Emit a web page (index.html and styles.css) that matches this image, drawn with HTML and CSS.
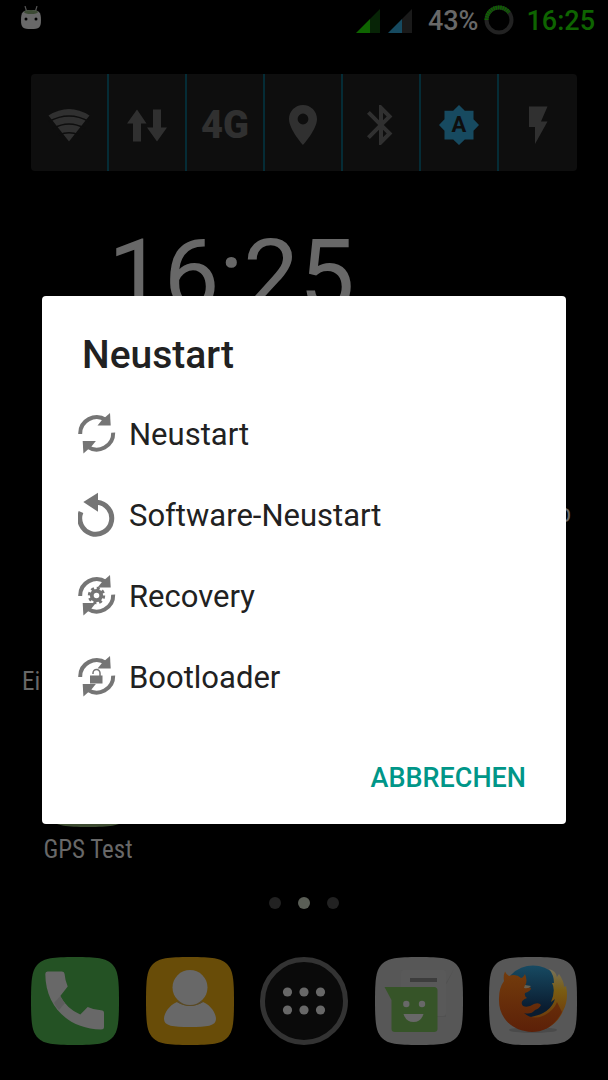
FILE: index.html
```html
<!DOCTYPE html>
<html lang="de">
<head>
    <meta charset="UTF-8">
    <meta name="viewport" content="width=device-width, initial-scale=1.0">
    <title>Neustart</title>
    <link rel="stylesheet" href="styles.css">
</head>
<body>

    <!-- Home screen behind the dialog -->
    <div class="home">
        <header class="status-bar">
            <svg class="robot" width="20" height="24" viewBox="0 0 20 24">
                <path d="M4 0l1.500 5M16 0l-1.500 5" stroke="#555" stroke-width="1.200"/>
                <path d="M10 4C18 4 20 6 20 14S18 23 10 23 0 22 0 14 2 4 10 4z" fill="#686868"/>
                <ellipse cx="10" cy="6" rx="7" ry="2" fill="#3c4a34"/>
                <circle cx="5" cy="13" r="1.500"/>
                <circle cx="15" cy="13" r="1.500"/>
            </svg>
            <div class="status-right">
                <svg class="signal" width="24" height="24" viewBox="0 0 24 24">
                    <path d="M24 0v24H14V10z" fill="#072406"/>
                    <path d="M14 10v14H0z" fill="#0e6400"/>
                </svg>
                <svg class="signal" width="24" height="24" viewBox="0 0 24 24">
                    <path d="M24 0v24H14V10z" fill="#1a1a1a"/>
                    <path d="M14 10v14H0z" fill="#164a60"/>
                </svg>
                <span class="percent">43%</span>
                <svg class="battery" width="30" height="30" viewBox="0 0 30 30">
                    <circle cx="15" cy="15" r="12.500" fill="none" stroke="#222" stroke-width="4"/>
                    <path d="M2.500 15A12.500 12.500 0 0 1 25 7.500" fill="none" stroke="#0e6400" stroke-width="4" stroke-dasharray="1.600 0.700"/>
                </svg>
                <span class="time">16:25</span>
            </div>
        </header>

        <div class="toggles">
            <button class="toggle" aria-label="WLAN">
                <svg viewBox="0 0 48 48">
                    <path d="M24 40.500L3.500 14.500Q24 1.500 44.500 14.500z" fill="#303030"/>
                    <path d="M4 20.500Q24 9.500 44 20.500M8 27.500Q24 18.500 40 27.500M14 34Q24 29.500 34 34" fill="none" stroke="#0e0e0e" stroke-width="1.500"/>
                </svg>
            </button>
            <button class="toggle" aria-label="Daten">
                <svg viewBox="0 0 48 48" fill="#303030">
                    <path d="M14 8.500L23.500 22.500H18V40.500H10V22.500H4z"/>
                    <path d="M34 40.500L24 26.500H30V8.500H38V26.500H44z"/>
                </svg>
            </button>
            <button class="toggle">4G</button>
            <button class="toggle" aria-label="Standort">
                <svg viewBox="0 0 24 24" fill="#303030">
                    <path d="M12 2C8.130 2 5 5.130 5 9c0 5.250 7 13 7 13s7-7.750 7-13c0-3.870-3.130-7-7-7zm0 9.700a2.700 2.700 0 1 1 0-5.400 2.700 2.700 0 0 1 0 5.400z"/>
                </svg>
            </button>
            <button class="toggle" aria-label="Bluetooth">
                <svg viewBox="0 0 24 24" fill="#303030">
                    <path d="M17.710 7.710L12 2h-1v7.590L6.410 5 5 6.410 10.590 12 5 17.590 6.410 19 11 14.410V22h1l5.710-5.710-4.300-4.290 4.300-4.290zM13 5.830l1.880 1.880L13 9.590V5.830zm1.880 10.460L13 18.170v-3.760l1.880 1.880z"/>
                </svg>
            </button>
            <button class="toggle" aria-label="Helligkeit">
                <svg viewBox="0 0 48 48">
                    <path d="M24 4l5.800 5.800H38.500V18.200L44 24l-5.500 5.800V38.500H29.800L24 44l-5.800-5.500H9.500V29.800L4 24l5.500-5.800V9.800h8.700z" fill="#174a60"/>
                    <text class="auto" x="24" y="31" text-anchor="middle">A</text>
                </svg>
            </button>
            <button class="toggle" aria-label="Taschenlampe">
                <svg viewBox="0 0 48 48" fill="#303030">
                    <path d="M15 5.500V26h6v17L33.500 20.500H27L33.500 5.500z"/>
                </svg>
            </button>
        </div>

        <div class="clock">16:25</div>

        <div class="apps">
            <div class="app right">o</div>
            <div class="app left">Ei</div>
            <div class="app">
                <svg class="app-icon" viewBox="0 0 88 88">
                    <path d="M44 0C66 0 75 1 81 7S88 22 88 44 87 75 81 81 66 88 44 88 13 87 7 81 0 66 0 44 1 13 7 7 22 0 44 0z" fill="#3c4a30"/>
                </svg>
                GPS Test
            </div>
        </div>

        <div class="pages">
            <span class="dot"></span>
            <span class="dot current"></span>
            <span class="dot"></span>
        </div>

        <nav class="dock">
            <button class="dock-item" aria-label="Telefon">
                <svg viewBox="0 0 88 88">
                    <path d="M44 0C66 0 75 1 81 7S88 22 88 44 87 75 81 81 66 88 44 88 13 87 7 81 0 66 0 44 1 13 7 7 22 0 44 0z" fill="#245224"/>
                    <path d="M16.500 14.500H31Q33.500 14.500 33.600 17Q34 23 36.700 29.500L29.300 39Q36 52 49.300 57.500L56.700 50Q63 53 70 53.300Q73 53.400 73 56V70Q73 72.500 70 72.500C38 72 14.500 50 14.300 17Q14.300 14.500 16.500 14.500z" fill="#686868"/>
                    <path d="M29.300 39L23 46Q25 50 28 53L34 46Q31 43 29.300 39z" fill="#5e5e5e"/>
                </svg>
            </button>
            <button class="dock-item" aria-label="Kontakte">
                <svg viewBox="0 0 88 88">
                    <path d="M44 0C66 0 75 1 81 7S88 22 88 44 87 75 81 81 66 88 44 88 13 87 7 81 0 66 0 44 1 13 7 7 22 0 44 0z" fill="#684c08"/>
                    <path d="M31 45Q44 53 57 45C66 49 70 57 70 62C70 69 61 70 44 70S18 69 18 62C18 57 22 49 31 45z" fill="#686868"/>
                    <path d="M31 45Q44 53 57 45L55 43H33z" fill="#594a28"/>
                    <circle cx="44" cy="30.500" r="17.500" fill="#686868"/>
                </svg>
            </button>
            <button class="dock-item" aria-label="Apps">
                <svg viewBox="0 0 88 88">
                    <circle cx="44" cy="44" r="41.500" fill="#0a0a0a" stroke="#333" stroke-width="5"/>
                    <g fill="#686868">
                        <circle cx="27.500" cy="35" r="4.600"/>
                        <circle cx="44" cy="35" r="4.600"/>
                        <circle cx="60.500" cy="35" r="4.600"/>
                        <circle cx="27.500" cy="53" r="4.600"/>
                        <circle cx="44" cy="53" r="4.600"/>
                        <circle cx="60.500" cy="53" r="4.600"/>
                    </g>
                </svg>
            </button>
            <button class="dock-item" aria-label="Nachrichten">
                <svg viewBox="0 0 88 88">
                    <path d="M44 0C66 0 75 1 81 7S88 22 88 44 87 75 81 81 66 88 44 88 13 87 7 81 0 66 0 44 1 13 7 7 22 0 44 0z" fill="#575757"/>
                    <path d="M70 28L79 12 72 26z" fill="#505050"/>
                    <path d="M62 60h9V34L63 30z" fill="#525252"/>
                    <rect x="26" y="13" width="45" height="46" rx="3" fill="#595959"/>
                    <rect x="35" y="21" width="27" height="4" fill="#3d3d3d"/>
                    <path d="M9.500 30H59Q62.500 30 62.500 33.500V72Q62.500 75 59 75H20Q16.500 75 16.500 72V43z" fill="#365428"/>
                    <circle cx="31.300" cy="47" r="3.200" fill="#686868"/>
                    <circle cx="47" cy="47" r="3.200" fill="#686868"/>
                    <path d="M28.500 57H48.500Q46 65 38.500 65T28.500 57z" fill="#686868"/>
                </svg>
            </button>
            <button class="dock-item" aria-label="Firefox">
                <svg viewBox="0 0 88 88">
                    <defs>
                        <linearGradient id="globe" x1="0" y1="0" x2="0" y2="1">
                            <stop offset="0" stop-color="#174a62"/>
                            <stop offset="0.700" stop-color="#0a1c30"/>
                        </linearGradient>
                        <linearGradient id="fox" x1="0" y1="0" x2="0" y2="1">
                            <stop offset="0" stop-color="#733c0c"/>
                            <stop offset="1" stop-color="#5c2008"/>
                        </linearGradient>
                        <linearGradient id="tail" x1="0" y1="0" x2="0" y2="1">
                            <stop offset="0" stop-color="#77725a"/>
                            <stop offset="0.350" stop-color="#7a5c12"/>
                            <stop offset="1" stop-color="#682c08"/>
                        </linearGradient>
                    </defs>
                    <path d="M44 0C66 0 75 1 81 7S88 22 88 44 87 75 81 81 66 88 44 88 13 87 7 81 0 66 0 44 1 13 7 7 22 0 44 0z" fill="#575757"/>
                    <ellipse cx="44" cy="73" rx="24" ry="3" fill="#4a4a4a"/>
                    <circle cx="44" cy="39" r="30.500" fill="url(#globe)"/>
                    <path d="M60 12Q67 14 68 20L70 17Q75 24 75 30L77 29Q80 43 74 54C68 68 56 74 46 74L42 60Q62 56 66 42L62 45Q67 33 63 26L65 26Q65 18 60 12z" fill="url(#tail)"/>
                    <path d="M16 14.500Q17 17 20 19Q27 16 32 21Q34 21 36 17Q39 24 36 29L42 31Q42 34 36 36Q35 39 38 41Q30 44 34 49Q39 51 45 47Q50 45 52 48Q50 52 46 53Q42 58 35 56Q44 64 56 58Q65 53 68 45L73 55C65 70 54 75 43 75C22 74 9 60 10 41Q10 31 15 24Q14 19 16 14.500z" fill="url(#fox)"/>
                    <path d="M36 28L42 29Q40 32 35 31z" fill="#686050"/>
                </svg>
            </button>
        </nav>
    </div>

    <!-- The reboot dialog -->
    <div class="overlay">
        <section class="dialog" role="dialog" aria-labelledby="dialog-title">
            <h1 id="dialog-title">Neustart</h1>
            <ul class="options">
                <li>
                    <button class="option">
                        <svg width="40" height="48" viewBox="0 0 40 48">
                            <g id="half">
                                <path d="M2.200 23A16.500 16.500 0 0 1 28 9" fill="none" stroke="#757575" stroke-width="4"/>
                                <path d="M32 2L32.700 14.500 19.500 14.500 24 9z" fill="#757575"/>
                            </g>
                            <use href="#half" transform="rotate(180 18.700 22.300)"/>
                        </svg>
                        Neustart
                    </button>
                </li>
                <li>
                    <button class="option">
                        <svg width="40" height="48" viewBox="0 0 40 48">
                            <path d="M19 10.300A16 16 0 1 1 3 20" fill="none" stroke="#757575" stroke-width="5"/>
                            <path d="M5.300 10L20 0.700V19.700z" fill="#757575"/>
                        </svg>
                        Software-Neustart
                    </button>
                </li>
                <li>
                    <button class="option">
                        <svg width="40" height="48" viewBox="0 0 40 48">
                            <use href="#half"/>
                            <use href="#half" transform="rotate(180 18.700 22.300)"/>
                            <circle cx="18.500" cy="22.500" r="7.200" fill="none" stroke="#757575" stroke-width="3" stroke-dasharray="3 2.655"/>
                            <circle cx="18.500" cy="22.500" r="4.700" fill="none" stroke="#757575" stroke-width="3.800"/>
                        </svg>
                        Recovery
                    </button>
                </li>
                <li>
                    <button class="option">
                        <svg width="40" height="48" viewBox="0 0 40 48">
                            <use href="#half"/>
                            <use href="#half" transform="rotate(180 18.700 22.300)"/>
                            <rect x="12" y="21.500" width="12.500" height="8" fill="#757575"/>
                            <path d="M15 20V19A3.500 3.500 0 0 1 22 19V22" fill="none" stroke="#757575" stroke-width="1.500"/>
                        </svg>
                        Bootloader
                    </button>
                </li>
            </ul>
            <div class="actions">
                <button class="cancel">ABBRECHEN</button>
            </div>
        </section>
    </div>

</body>
</html>
```
FILE: styles.css
```css
* {
    box-sizing: border-box;
}

body {
    margin: 0;
    background-color: #000;
    font-family: Roboto, sans-serif;
}

button {
    padding: 0;
    border: none;
    background: none;
    font-family: inherit;
    cursor: pointer;
}

svg {
    display: block;
}

.home {
    display: flex;
    flex-direction: column;
    min-height: 100vh;
    color: #686868;
}

.status-bar {
    display: flex;
    justify-content: space-between;
    align-items: center;
    height: 42px;
    padding: 0 13px 0 21px;
}

.robot {
    margin-bottom: 6px;
}

.status-right {
    display: flex;
    align-items: center;
    font-size: 27px;
    font-weight: 500;
    line-height: 42px;
}

.signal {
    margin-right: 8px;
}

.percent {
    margin: 0 6px 0 8px;
}

.battery {
    margin-bottom: 2px;
}

.time {
    margin-left: 12px;
    color: #0e6400;
}

.toggles {
    display: grid;
    grid-template-columns: repeat(7, 1fr);
    height: 97px;
    margin: 32px 31px 0;
    border-radius: 4px;
    background-color: #0e0e0e;
}

.toggle {
    display: flex;
    justify-content: center;
    align-items: center;
    padding-top: 4px;
    border-right: 2px solid #052c36;
    color: #303030;
    font-size: 38px;
    font-weight: 900;
}

.toggle:last-child {
    border-right: none;
}

.toggle svg {
    width: 48px;
    height: 48px;
}

.auto {
    fill: #0e0e0e;
    font-size: 22px;
    font-weight: 700;
}

.clock {
    margin: 45px 0 0 108px;
    font-size: 99px;
    line-height: 118px;
}

.apps {
    display: grid;
    grid-template-columns: repeat(4, 1fr);
    grid-template-rows: repeat(3, 168px);
    flex: 1;
    align-content: end;
    padding: 0 16px;
    font-family: "Roboto Condensed", Roboto, sans-serif;
    font-size: 25px;
    line-height: 28px;
    text-align: center;
}

.app {
    display: flex;
    flex-direction: column;
    justify-content: flex-end;
    align-items: center;
    grid-column: 1;
}

.app.left {
    align-items: flex-start;
    padding-left: 6px;
}

.app.right {
    grid-column: 4;
    align-items: flex-end;
    padding-right: 21px;
}

.app-icon {
    width: 88px;
    height: 88px;
    margin-bottom: 9px;
}

.pages {
    display: flex;
    justify-content: center;
    gap: 17px;
    margin-top: 33px;
}

.dot {
    width: 12px;
    height: 12px;
    border-radius: 50%;
    background-color: #222;
}

.dot.current {
    background-color: #5a5e56;
}

.dock {
    display: flex;
    justify-content: space-between;
    padding: 48px 31px 35px;
}

.dock-item svg {
    width: 88px;
    height: 88px;
}

.overlay {
    position: fixed;
    top: 40px;
    right: 0;
    bottom: 0;
    left: 0;
    display: flex;
    justify-content: center;
    align-items: center;
    padding: 0 42px;
}

.dialog {
    width: 100%;
    padding: 37px 40px 17px 36px;
    border-radius: 4px;
    background-color: #fff;
    color: #212121;
}

.dialog h1 {
    margin: 0 0 17px 4px;
    font-size: 39px;
    font-weight: 500;
    line-height: 44px;
}

.options {
    margin: 0;
    padding: 0;
    list-style: none;
}

.option {
    display: flex;
    align-items: center;
    gap: 11px;
    width: 100%;
    height: 81px;
    color: #212121;
    font-size: 31px;
    text-align: left;
}

.actions {
    display: flex;
    justify-content: flex-end;
    padding-top: 31px;
}

.cancel {
    height: 58px;
    color: #009688;
    font-size: 27px;
    font-weight: 500;
}
```
